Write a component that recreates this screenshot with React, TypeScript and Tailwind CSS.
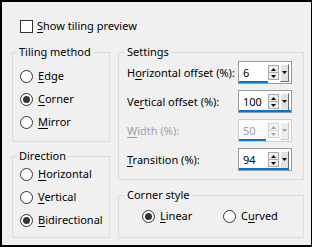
import React, { ReactNode } from "react";

function Radio({ checked, label }: { checked?: boolean; label: ReactNode }) {
  return (
    <div className="flex items-center h-4 gap-[5px]">
      <span className="w-[13px] h-[13px] rounded-full border border-[#333333] bg-white flex items-center justify-center shrink-0">
        {checked && <span className="w-[7px] h-[7px] rounded-full bg-[#333333]" />}
      </span>
      <span>{label}</span>
    </div>
  );
}

function Up({ color }: { color: string }) {
  return (
    <svg width="5" height="3" viewBox="0 0 5 3">
      <path d="M0 3 L2.5 0 L5 3 Z" fill={color} />
    </svg>
  );
}
function Down({ color }: { color: string }) {
  return (
    <svg width="5" height="3" viewBox="0 0 5 3">
      <path d="M0 0 L5 0 L2.5 3 Z" fill={color} />
    </svg>
  );
}

function Spin({ value, bar, disabled }: { value: string; bar: number; disabled?: boolean }) {
  const arrow = disabled ? "#a0a0a0" : "#000000";
  return (
    <div
      className={`relative w-[54px] h-[23px] border flex items-center ${
        disabled ? "border-[#cfcfcf] bg-[#fbfbfb]" : "border-[#9a9a9a] bg-white"
      }`}
    >
      <span className={`flex-1 pl-[4px] ${disabled ? "text-[#a0a0a0]" : "text-black"}`}>{value}</span>
      <div
        className={`w-[11px] h-[15px] border flex flex-col ${
          disabled ? "border-[#d5d5d5] bg-[#f4f4f4]" : "border-[#a8a8a8] bg-[#f0f0f0]"
        }`}
      >
        <div className={`flex-1 flex items-center justify-center border-b ${disabled ? "border-[#d5d5d5]" : "border-[#a8a8a8]"}`}>
          <Up color={arrow} />
        </div>
        <div className="flex-1 flex items-center justify-center">
          <Down color={arrow} />
        </div>
      </div>
      <div
        className={`ml-[1px] mr-[2px] w-[9px] h-[18px] border-t border-l border-white border-r border-b flex items-center justify-center ${
          disabled ? "border-r-[#c8c8c8] border-b-[#c8c8c8] bg-[#eeeeee]" : "border-r-[#696969] border-b-[#696969] bg-[#e3e3e3]"
        }`}
      >
        <Down color={arrow} />
      </div>
      <div className="absolute left-0 bottom-0 h-[2px] bg-[#0078d7]" style={{ width: bar }} />
    </div>
  );
}

function Row({ label, children, disabled }: { label: ReactNode; children: ReactNode; disabled?: boolean }) {
  return (
    <div className="flex items-center justify-between h-[23px]">
      <span className={disabled ? "text-[#a0a0a0]" : "text-black"}>{label}</span>
      {children}
    </div>
  );
}

const U = ({ c }: { c: string }) => <span className="underline underline-offset-2">{c}</span>;

export default function App() {
  return (
    <div className="w-[312px] h-[247px] bg-[#f0f0f0] border-black border-t-2 border-l-2 border-b-2 border-r font-['Noto_Sans',sans-serif] text-[11px] text-black leading-4 flex flex-col">
      <div className="mt-[16px] ml-[18px] flex items-center h-4 gap-[4px]">
        <span className="w-[13px] h-[13px] border border-[#333333] bg-white shrink-0" />
        <span>
          <U c="S" />
          how tiling preview
        </span>
      </div>
      <div className="mt-[11px] ml-[10px] flex gap-[8px]">
        <div className="w-[98px] flex flex-col gap-[7px]">
          <fieldset className="border border-[#dcdcdc] pl-[7px] pt-[9px] pb-[11px] flex flex-col gap-[7px]">
            <legend className="-ml-[3px] px-[2px] leading-[14px]">Tiling method</legend>
            <Radio label={<><U c="E" />dge</>} />
            <Radio checked label={<><U c="C" />orner</>} />
            <Radio label={<><U c="M" />irror</>} />
          </fieldset>
          <fieldset className="border border-[#dcdcdc] pl-[7px] pt-[3px] pb-[9px] flex flex-col gap-[7px]">
            <legend className="-ml-[3px] px-[2px] leading-[14px]">Direction</legend>
            <Radio label={<><U c="H" />orizontal</>} />
            <Radio label={<><U c="V" />ertical</>} />
            <Radio checked label={<><U c="B" />idirectional</>} />
          </fieldset>
        </div>
        <div className="w-[186px] flex flex-col gap-[8px]">
          <fieldset className="border border-[#dcdcdc] pl-[8px] pr-[11px] pt-[2px] pb-[8px] flex flex-col gap-[6px]">
            <legend className="-ml-[2px] px-[2px] leading-[14px]">Settings</legend>
            <Row label={<>H<U c="o" />rizontal offset (%):</>}>
              <Spin value="6" bar={29} />
            </Row>
            <Row label={<>Ve<U c="r" />tical offset (%):</>}>
              <Spin value="100" bar={52} />
            </Row>
            <Row disabled label={<><U c="W" />idth (%):</>}>
              <Spin value="50" bar={27} disabled />
            </Row>
            <Row label={<><U c="T" />ransition (%):</>}>
              <Spin value="94" bar={50} />
            </Row>
          </fieldset>
          <fieldset className="border border-[#dcdcdc] pl-[8px] pb-[14px]">
            <legend className="-ml-[2px] px-[2px] leading-[14px]">Corner style</legend>
            <div className="mt-[7px] pl-[15px] flex items-center h-[14px]">
              <div className="w-[81px]">
                <Radio checked label={<><U c="L" />inear</>} />
              </div>
              <Radio label={<>C<U c="u" />rved</>} />
            </div>
          </fieldset>
        </div>
      </div>
    </div>
  );
}
